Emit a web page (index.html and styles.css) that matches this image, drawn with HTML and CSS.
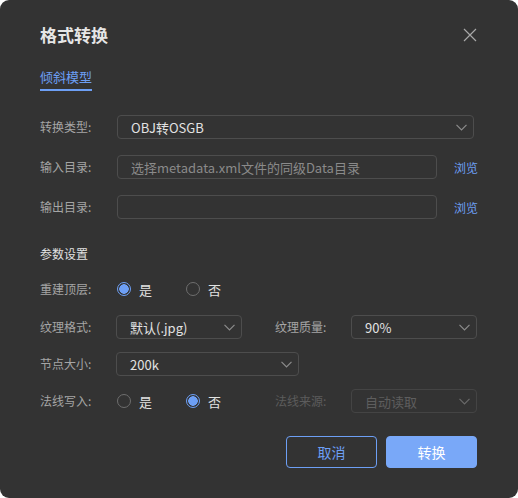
FILE: index.html
```html
<!DOCTYPE html>
<html lang="zh-CN">
<head>
<meta charset="utf-8">
<title>格式转换</title>
<link rel="stylesheet" href="styles.css">
</head>
<body>
<div class="dialog">
  <header class="dlg-header">
    <h1 class="dlg-title">格式转换</h1>
    <button class="dlg-close" aria-label="关闭">
      <svg width="14" height="14" viewBox="0 0 14 14"><path d="M1 1L13 13M13 1L1 13" stroke="#a8a8a8" stroke-width="1.2" fill="none"/></svg>
    </button>
  </header>

  <nav class="tabs"><span class="tab active">倾斜模型</span></nav>

  <section class="main-rows">
    <div class="row">
      <span class="label">转换类型:</span>
      <div class="select wide"><span class="val">OBJ转OSGB</span><svg class="chev" width="11" height="7" viewBox="0 0 11 7"><path d="M0.5 0.8L5.5 5.8L10.5 0.8" stroke="#8c8c8c" stroke-width="1.2" fill="none"/></svg></div>
    </div>
    <div class="row">
      <span class="label">输入目录:</span>
      <div class="input"><span class="placeholder">选择metadata.xml文件的同级Data目录</span></div>
      <a class="browse">浏览</a>
    </div>
    <div class="row">
      <span class="label">输出目录:</span>
      <div class="input"></div>
      <a class="browse">浏览</a>
    </div>
  </section>

  <h2 class="section-title">参数设置</h2>

  <section class="params">
    <div class="row radio-row">
      <span class="label">重建顶层:</span>
      <div class="radio-group">
        <span class="radio checked"><i class="dot"></i>是</span>
        <span class="radio"><i class="dot"></i>否</span>
      </div>
    </div>
    <div class="row">
      <span class="label">纹理格式:</span>
      <div class="select half"><span class="val">默认(.jpg)</span><svg class="chev" width="11" height="7" viewBox="0 0 11 7"><path d="M0.5 0.8L5.5 5.8L10.5 0.8" stroke="#8c8c8c" stroke-width="1.2" fill="none"/></svg></div>
      <span class="label second">纹理质量:</span>
      <div class="select half"><span class="val">90%</span><svg class="chev" width="11" height="7" viewBox="0 0 11 7"><path d="M0.5 0.8L5.5 5.8L10.5 0.8" stroke="#8c8c8c" stroke-width="1.2" fill="none"/></svg></div>
    </div>
    <div class="row">
      <span class="label">节点大小:</span>
      <div class="select mid"><span class="val">200k</span><svg class="chev" width="11" height="7" viewBox="0 0 11 7"><path d="M0.5 0.8L5.5 5.8L10.5 0.8" stroke="#8c8c8c" stroke-width="1.2" fill="none"/></svg></div>
    </div>
    <div class="row">
      <span class="label">法线写入:</span>
      <div class="radio-group">
        <span class="radio"><i class="dot"></i>是</span>
        <span class="radio checked"><i class="dot"></i>否</span>
      </div>
      <span class="label second disabled">法线来源:</span>
      <div class="select half disabled"><span class="val">自动读取</span><svg class="chev" width="11" height="7" viewBox="0 0 11 7"><path d="M0.5 0.8L5.5 5.8L10.5 0.8" stroke="#6a6a6a" stroke-width="1.2" fill="none"/></svg></div>
    </div>
  </section>

  <footer class="actions">
    <button class="btn ghost">取消</button>
    <button class="btn primary">转换</button>
  </footer>
</div>
</body>
</html>
```

FILE: styles.css
```css
* { box-sizing: border-box; }
html, body { margin: 0; padding: 0; background: #ffffff; }
body {
  font-family: "Noto Sans CJK SC", "Noto Sans", sans-serif;
  width: 518px;
  height: 498px;
}
.dialog {
  width: 518px;
  height: 498px;
  background: #333333;
  border-radius: 9px;
  padding: 23px 40px 0 40px;
  color: #e2e2e2;
}
.dlg-header {
  display: flex;
  justify-content: space-between;
  align-items: center;
  height: 24px;
}
.dlg-title {
  margin: 0;
  font-size: 17px;
  font-weight: 700;
  line-height: 24px;
  color: #e6e6e6;
}
.dlg-close {
  background: none;
  border: 0;
  padding: 0;
  width: 14px;
  height: 14px;
  margin-right: 1px;
  display: flex;
}
.tabs {
  margin-top: 20px;
  display: flex;
}
.tab {
  font-size: 13px;
  line-height: 20px;
  padding-bottom: 2px;
  border-bottom: 2px solid #6d9ff5;
  color: #6d9ff5;
}
.main-rows {
  margin-top: 24px;
  display: flex;
  flex-direction: column;
  gap: 16px;
}
.row {
  display: flex;
  align-items: center;
  height: 24px;
}
.label {
  width: 77px;
  flex: none;
  font-size: 12px;
  color: #a5a5a5;
  line-height: 24px;
}
.label.second { width: 76px; margin-left: 33px; }
.label.disabled { color: #5c5c5c; }
.select, .input {
  height: 24px;
  border: 1px solid #4d4d4d;
  border-radius: 4px;
  display: flex;
  align-items: center;
  justify-content: space-between;
  font-size: 13px;
  color: #e2e2e2;
  padding: 0 6px 0 13px;
}
.select.wide { width: 357px; }
.input { width: 320px; }
.placeholder { color: #8a8a8a; }
.browse {
  margin-left: 17px;
  font-size: 12px;
  color: #6d9ff5;
}
.section-title {
  margin: 25px 0 0 0;
  font-size: 12px;
  font-weight: 400;
  line-height: 20px;
  color: #e2e2e2;
}
.params {
  margin-top: 13px;
  display: flex;
  flex-direction: column;
  gap: 13px;
}
.params .label { width: 76px; }
.params .label.second { width: 76px; }
.radio-row { margin-bottom: 1px; }
.radio-group {
  width: 126px;
  flex: none;
  display: flex;
  align-items: center;
}
.radio {
  width: 69px;
  flex: none;
  display: flex;
  align-items: center;
  gap: 8px;
  font-size: 13px;
  color: #e2e2e2;
  padding-left: 1px;
}
.radio .dot {
  width: 14px;
  height: 14px;
  border-radius: 50%;
  border: 1px solid #6e6e6e;
  display: inline-block;
  flex: none;
}
.radio.checked .dot {
  border-color: #6d9ff5;
  background: radial-gradient(circle, #6d9ff5 0 4.5px, transparent 5px);
}
.select.half { width: 126px; }
.select.mid { width: 183px; }
.select.disabled { border-color: #444444; color: #5e5e5e; }
.chev { flex: none; }
.actions {
  margin-top: 23px;
  display: flex;
  justify-content: flex-end;
  gap: 9px;
  padding-right: 1px;
}
.btn {
  width: 91px;
  height: 32px;
  border-radius: 4px;
  font-family: inherit;
  font-size: 14px;
}
.btn.ghost {
  background: transparent;
  border: 1px solid #6d9ff5;
  color: #6d9ff5;
}
.btn.primary {
  background: #79a8f8;
  border: 1px solid #79a8f8;
  color: #ffffff;
}
```
